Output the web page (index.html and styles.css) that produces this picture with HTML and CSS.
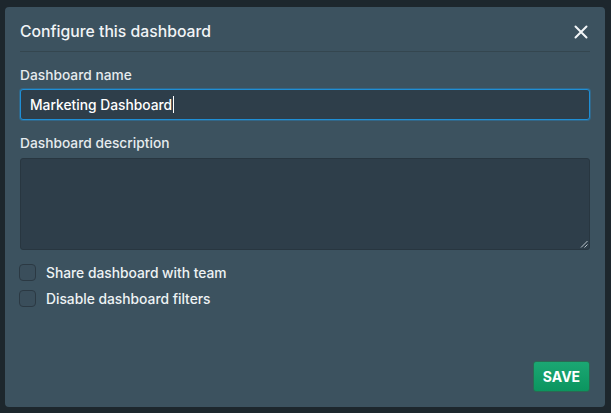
FILE: index.html
```html
<!DOCTYPE html>
<html>
<head>
<meta charset="utf-8">
<link rel="stylesheet" href="styles.css">
</head>
<body>
<div class="modal">
  <div class="modal-header">
    <h2 class="title">Configure this dashboard</h2>
    <button class="close" aria-label="Close">
      <svg width="14" height="14" viewBox="0 0 14 14"><path d="M1.5 1.5 L12.5 12.5 M12.5 1.5 L1.5 12.5" stroke="#f2f5f7" stroke-width="2" stroke-linecap="round" fill="none"/></svg>
    </button>
  </div>
  <div class="modal-body">
    <label class="label">Dashboard name</label>
    <div class="input focused"><span>Marketing Dashboard</span><span class="caret"></span></div>
    <label class="label">Dashboard description</label>
    <div class="textarea">
      <svg class="grip" width="8" height="8" viewBox="0 0 8 8"><path d="M7.5 1 L1 7.5 M7.5 4.5 L4.5 7.5" stroke="#b9c3c9" stroke-width="1" fill="none"/></svg>
    </div>
    <div class="check"><span class="box"></span><span>Share dashboard with team</span></div>
    <div class="check"><span class="box"></span><span>Disable dashboard filters</span></div>
  </div>
  <div class="modal-footer">
    <button class="save">SAVE</button>
  </div>
</div>
</body>
</html>
```
FILE: styles.css
```css
html, body {
  margin: 0;
  padding: 0;
}
body {
  width: 611px;
  height: 413px;
  background: #1d272d;
  font-family: Inter, "Liberation Sans", Arial, sans-serif;
  color: #eef2f4;
  padding: 7px 0 0 5px;
  box-sizing: border-box;
  overflow: hidden;
}
.modal {
  width: 600px;
  height: 400px;
  background: #3c525f;
  border-radius: 4px;
  box-sizing: border-box;
  padding: 0 15px;
  display: flex;
  flex-direction: column;
}
.modal-header {
  height: 45px;
  border-bottom: 1px solid #34464f;
  display: flex;
  align-items: center;
  justify-content: space-between;
  box-sizing: border-box;
  padding-top: 5px;
}
.title {
  margin: 0;
  font-size: 15.75px;
  font-weight: 500;
  color: #f1f4f6;
}
.close {
  background: none;
  border: 0;
  padding: 0;
  margin-right: 2px;
  width: 14px;
  height: 14px;
  display: flex;
}
.modal-body {
  display: flex;
  flex-direction: column;
  padding-top: 15px;
}
.label {
  font-size: 13.75px;
  font-weight: 500;
  color: #e6ebee;
  line-height: 16px;
  height: 16px;
}
.input {
  margin-top: 6px;
  height: 31px;
  box-sizing: border-box;
  background: #2e3e4a;
  border: 1px solid #2c3943;
  border-radius: 3px;
  display: flex;
  align-items: center;
  padding-left: 9px;
  font-size: 13.8px;
  font-weight: 500;
  color: #ffffff;
}
.input.focused {
  border-color: #1f8fd6;
  box-shadow: 0 0 0 1px rgba(31, 143, 214, 0.35);
}
.caret {
  width: 1px;
  height: 17px;
  background: #ffffff;
  margin-left: 1px;
}
.input + .label {
  margin-top: 15px;
}
.textarea {
  margin-top: 7px;
  height: 92px;
  box-sizing: border-box;
  background: #2e3e4a;
  border: 1px solid #283640;
  border-radius: 3px;
  display: flex;
  justify-content: flex-end;
  align-items: flex-end;
}
.grip {
  margin: 0 1px 1px 0;
}
.check {
  display: flex;
  align-items: center;
  font-size: 13.8px;
  font-weight: 500;
  color: #eef2f4;
  height: 17px;
  margin-top: 9px;
  margin-left: -1px;
}
.textarea + .check {
  margin-top: 14px;
}
.box {
  width: 17px;
  height: 17px;
  box-sizing: border-box;
  border: 1px solid #2b3943;
  background: #3a4e5b;
  border-radius: 4px;
  margin-right: 10px;
}
.modal-footer {
  margin-top: auto;
  display: flex;
  justify-content: flex-end;
  padding-bottom: 15px;
}
.save {
  width: 57px;
  height: 31px;
  border: 1px solid #2a6a52;
  border-radius: 3px;
  background: linear-gradient(#1ba773, #0b955f);
  color: #ffffff;
  font-family: Inter, "Liberation Sans", Arial, sans-serif;
  font-weight: 700;
  font-size: 14px;
  padding: 0;
}
```
